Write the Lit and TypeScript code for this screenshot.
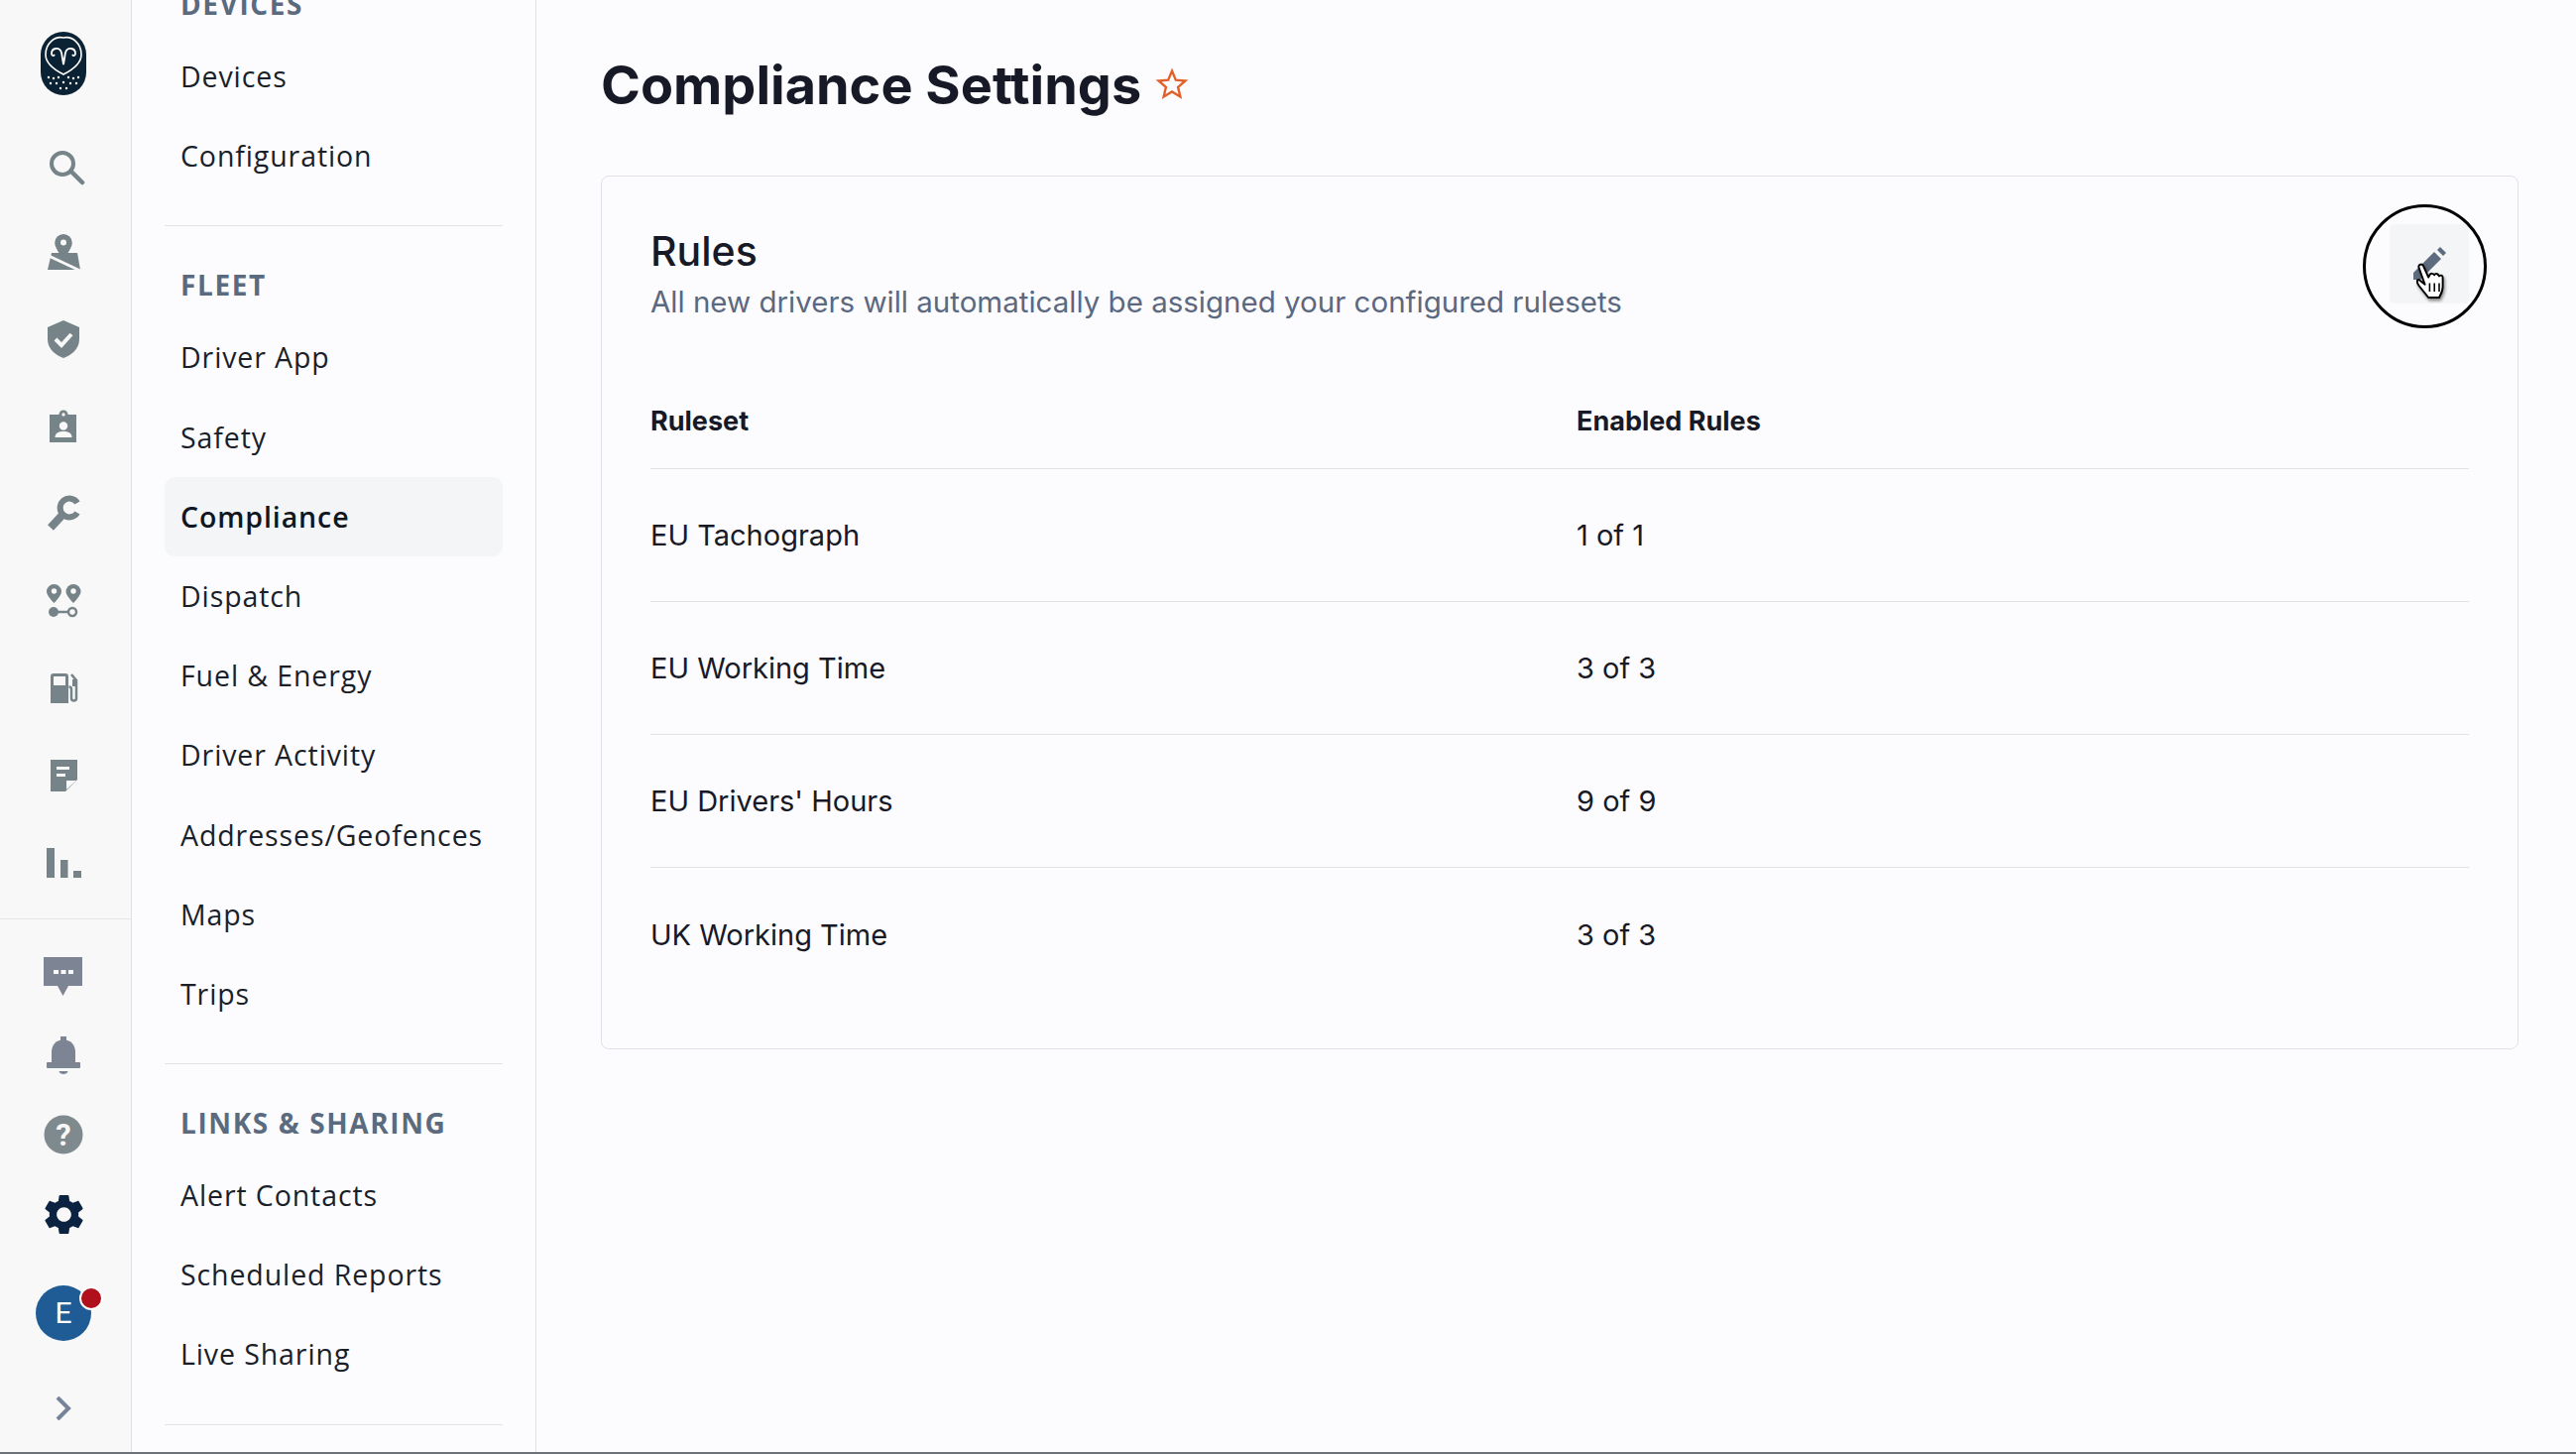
import { LitElement, html, css, svg } from "lit";
import { customElement } from "lit/decorators.js";

const G = "#768389";
const icon = (body: unknown, size = 44) =>
  html`<svg width=${size} height=${size} viewBox="0 0 44 44" aria-hidden="true">${body}</svg>`;

const topIcons = [
  svg`<g transform="translate(0 3)"><circle cx="21" cy="18" r="11" fill="none" stroke=${G} stroke-width="4"/><path d="M30 26 41 37" stroke=${G} stroke-width="4.5" stroke-linecap="round"/></g>`,
  svg`<path d="M6 40 10 23H36L39 40Z" fill=${G}/><path d="M22 4a8.8 8.8 0 0 1 8.8 8.8C30.8 19 22 29 22 29S13.2 19 13.2 12.8A8.8 8.8 0 0 1 22 4Z" fill=${G}/><circle cx="22" cy="12.5" r="3" fill="#f7f8f7"/><path d="M5 25 39 41" stroke="#f7f8f7" stroke-width="3"/>`,
  svg`<path d="M22 3 38 10V22C38 32 30 38 22 41 14 38 6 32 6 22V10Z" fill=${G}/><path d="M14 22l6 6 10-11" fill="none" stroke="#f7f8f7" stroke-width="4"/>`,
  svg`<rect x="8" y="10" width="27" height="28" fill=${G}/><circle cx="22" cy="10" r="4.5" fill=${G}/><circle cx="22" cy="10" r="1.7" fill="#f7f8f7"/><circle cx="22" cy="21.5" r="4.2" fill="#f7f8f7"/><path d="M13.5 33c0-4.5 4-6 8.5-6s8.5 1.5 8.5 6Z" fill="#f7f8f7"/>`,
  svg`<path d="M36 11A9.4 9.4 0 1 0 36 21" fill="none" stroke=${G} stroke-width="6"/><path d="M9 36 23 21" stroke=${G} stroke-width="8"/>`,
  svg`<path d="M12.5 5A7.5 7.5 0 0 1 20 12.5C20 16.5 12.5 24 12.5 24S5 16.5 5 12.5A7.5 7.5 0 0 1 12.5 5Z" fill=${G}/><circle cx="12.5" cy="12" r="2.7" fill="#f7f8f7"/><path d="M32 5A7.5 7.5 0 0 1 39.5 12.5C39.5 16.5 32 24 32 24S24.5 16.5 24.5 12.5A7.5 7.5 0 0 1 32 5Z" fill=${G}/><circle cx="32" cy="12" r="2.7" fill="#f7f8f7"/><circle cx="12" cy="33" r="5" fill=${G}/><path d="M12 33H27" stroke=${G} stroke-width="2.5"/><circle cx="31" cy="33" r="4" fill="none" stroke=${G} stroke-width="2.5"/>`,
  svg`<path d="M9 37V10a3 3 0 0 1 3-3H24a3 3 0 0 1 3 3V37Z" fill=${G}/><rect x="12" y="10" width="12" height="9" fill="#f7f8f7"/><path d="M30 8l5 6V32a2.5 2.5 0 0 1-5 0V23a2.5 2.5 0 0 0-2.5-2.5" fill="none" stroke=${G} stroke-width="2.5"/><rect x="31" y="13" width="4" height="7" fill=${G}/>`,
  svg`<path d="M9 6H36V26L24 38H9Z" fill=${G}/><rect x="15" y="13" width="13" height="3" fill="#f7f8f7"/><rect x="15" y="20" width="9" height="3" fill="#f7f8f7"/><path d="M25 36V27H35Z" fill="#f7f8f7"/>`,
  svg`<rect x="5" y="7" width="8" height="30" fill=${G}/><rect x="19" y="19" width="7.5" height="18" fill=${G}/><rect x="32" y="30" width="8" height="7" fill=${G}/>`,
];

const B = "#7d8493";
const bottomIcons = [
  icon(svg`<path d="M2 3H41V32H27L21.5 42 16 32H2Z" fill=${B}/><rect x="12" y="16" width="5" height="4" fill="#f7f8f7"/><rect x="19.5" y="16" width="5" height="4" fill="#f7f8f7"/><rect x="27" y="16" width="5" height="4" fill="#f7f8f7"/>`),
  icon(svg`<rect x="19" y="3" width="6" height="6" fill=${B}/><path d="M10 30V19C10 11 15 6.5 22 6.5S34 11 34 19V30Z" fill=${B}/><rect x="5" y="29" width="34" height="6" rx="1" fill=${B}/><path d="M17.5 38h9c-.5 2-2 3-4.5 3s-4-1-4.5-3Z" fill=${B}/>`),
  icon(svg`<circle cx="22" cy="22" r="19.5" fill="#7f8a8e"/><text x="22" y="33" text-anchor="middle" class="q">?</text>`),
  html`<svg width="49" height="49" viewBox="0 0 24 24" aria-hidden="true"><path fill="#0b2240" d="M19.14 12.94c.04-.3.06-.61.06-.94 0-.32-.02-.64-.07-.94l2.03-1.58c.18-.14.23-.41.12-.61l-1.92-3.32c-.12-.22-.37-.29-.59-.22l-2.39.96c-.5-.38-1.03-.7-1.62-.94l-.36-2.54c-.04-.24-.24-.41-.48-.41h-3.84c-.24 0-.43.17-.47.41l-.36 2.54c-.59.24-1.13.57-1.62.94l-2.39-.96c-.22-.08-.47 0-.59.22L2.74 8.87c-.12.21-.08.47.12.61l2.03 1.58c-.05.3-.09.63-.09.94s.02.64.07.94l-2.03 1.58c-.18.14-.23.41-.12.61l1.92 3.32c.12.22.37.29.59.22l2.39-.96c.5.38 1.03.7 1.62.94l.36 2.54c.05.24.24.41.48.41h3.84c.24 0 .44-.17.47-.41l.36-2.54c.59-.24 1.13-.56 1.62-.94l2.39.96c.22.08.47 0 .59-.22l1.92-3.32c.12-.22.07-.47-.12-.61l-2.01-1.58zM12 15.6c-1.98 0-3.6-1.62-3.6-3.6s1.62-3.6 3.6-3.6 3.6 1.62 3.6 3.6-1.62 3.6-3.6 3.6z"/></svg>`,
];

const logo = html`<svg width="46" height="64" viewBox="0 0 46 64" aria-hidden="true">
  <rect width="46" height="64" rx="23" fill="#0a2233"/>
  <path d="M23 6C32 4 41 12 41 23 41 32 31 39 23 43 15 39 5 32 5 23 5 12 14 4 23 6Z" fill="none" stroke="#fff" stroke-width="1.6"/>
  <path d="M11 22c0-6 8-7 10-1l2 12 2-12c2-6 10-5 10 1 0 2-2 3-3 1M11 22c0 2 2 3 3 1" fill="none" stroke="#fff" stroke-width="1.8"/>
  <g fill="#fff"><circle cx="8" cy="46" r="1.2"/><circle cx="13" cy="47" r="1.2"/><circle cx="18" cy="46" r="1.2"/><circle cx="28" cy="46" r="1.2"/><circle cx="33" cy="47" r="1.2"/><circle cx="38" cy="46" r="1.2"/>
  <circle cx="10" cy="52" r="1.2"/><circle cx="16" cy="52" r="1.2"/><circle cx="23" cy="51" r="1.2"/><circle cx="30" cy="52" r="1.2"/><circle cx="36" cy="52" r="1.2"/><circle cx="20" cy="57" r="1.2"/><circle cx="26" cy="57" r="1.2"/></g>
</svg>`;

const sections = [
  { label: "DEVICES", items: ["Devices", "Configuration"] },
  { label: "FLEET", items: ["Driver App", "Safety", "Compliance", "Dispatch", "Fuel & Energy", "Driver Activity", "Addresses/Geofences", "Maps", "Trips"] },
  { label: "LINKS & SHARING", items: ["Alert Contacts", "Scheduled Reports", "Live Sharing"] },
];

const rows = [
  ["EU Tachograph", "1 of 1"],
  ["EU Working Time", "3 of 3"],
  ["EU Drivers' Hours", "9 of 9"],
  ["UK Working Time", "3 of 3"],
];

@customElement("app-root")
export class AppRoot extends LitElement {
  static styles = css`
    :host { display: block; width: 2598px; height: 1466px; overflow: hidden; background: #fcfcfe; }
    * { box-sizing: border-box; }
    .page { display: flex; height: 1464px; }
    .endline { height: 2px; background: #6d7178; }
    .rail { width: 133px; flex: none; background: #f7f8f7; border-right: 1px solid #dfe3e6; display: flex; flex-direction: column; align-items: center; padding: 32px 4px 0 0; }
    .logo { height: 64px; margin-bottom: 26px; display: flex; }
    .cell { height: 88px; width: 100%; display: flex; align-items: center; justify-content: center; flex: none; }
    .rail hr { align-self: stretch; margin: 12px -4px 17px 0; border: 0; border-top: 1px solid #e4e7e8; }
    .cell.low { height: 80px; }
    .q { font: 700 31px "Roboto", sans-serif; fill: #f7f8f7; }
    .avatar { position: relative; width: 56px; height: 56px; margin-top: 32px; flex: none; border-radius: 50%; background: #1f5c96; color: #fff; font: 400 30px/56px "Roboto", sans-serif; text-align: center; }
    .dot { position: absolute; left: 44px; top: 1px; width: 24px; height: 24px; border-radius: 50%; background: #b0101c; border: 2.5px solid #fff; }
    .chev { margin-top: 56px; display: flex; }
    .side { width: 408px; flex: none; border-right: 1px solid #dfe3e8; padding: 0 33px; font-family: "Open Sans", sans-serif; overflow: hidden; }
    .side-inner { margin-top: -16px; }
    .label { height: 40px; line-height: 40px; padding-left: 16px; font-size: 28px; font-weight: 700; color: #5b6b7f; letter-spacing: 1.6px; margin-bottom: 13px; white-space: nowrap; }
    .item { height: 80.2px; line-height: 80.2px; padding-left: 16px; font-size: 28.5px; color: #1a1f29; white-space: nowrap; border-radius: 10px; letter-spacing: .9px; }
    .item.on { background: #f4f5f6; font-weight: 600; color: #12161f; }
    .side hr { margin: 30px 0 39px; border: 0; border-top: 1px solid #dfe2e6; }
    .main { flex: 1; min-width: 0; padding: 0 58px 0 65px; font-family: "Inter", sans-serif; color: #171a26; }
    .title { height: 177px; display: flex; align-items: center; gap: 14px; padding-bottom: 5px; }
    .title svg { margin-bottom: 3px; }
    h1 { margin: 0; font-size: 54px; font-weight: 700; line-height: 64px; }
    .card { border: 1px solid #dfe2e8; border-radius: 8px; padding: 48px 49px; }
    .head { display: flex; justify-content: space-between; align-items: flex-start; margin-bottom: 51px; }
    .intro { padding-top: 2px; }
    h2 { margin: 0 0 4px; font-size: 41px; font-weight: 500; line-height: 50px; }
    .sub { font-size: 29.5px; line-height: 44px; color: #5b6880; }
    .btn { position: relative; width: 80px; height: 80px; background: #f4f5f6; border-radius: 4px; }
    .ring { position: absolute; left: -27px; top: -20px; width: 125px; height: 125px; border: 3px solid #000; border-radius: 50%; }
    .btn svg { position: absolute; left: 0; top: 0; }
    .hand { filter: drop-shadow(1px 2px 1.5px rgba(0,0,0,.45)); }
    .grid { display: grid; grid-template-columns: 934px 1fr; }
    .th, .td { display: flex; align-items: center; border-bottom: 1px solid #dfe3e7; }
    .th { height: 96px; font-size: 27px; font-weight: 700; }
    .td { height: 134px; font-size: 29px; }
    .td.last { border-bottom: 0; }
  `;

  render() {
    return html`
      <div class="page">
        <div class="rail">
          <div class="logo">${logo}</div>
          ${topIcons.map((i) => html`<div class="cell">${icon(i)}</div>`)}
          <hr />
          ${bottomIcons.map((i) => html`<div class="cell low">${i}</div>`)}
          <div class="avatar">E<span class="dot"></span></div>
          <div class="chev"><svg width="16" height="24" viewBox="0 0 16 24" aria-hidden="true"><path d="M2 1 13 12 2 23" fill="none" stroke="#77839a" stroke-width="4"/></svg></div>
        </div>
        <div class="side"><div class="side-inner">
          ${sections.map((s) => html`
            <div class="label">${s.label}</div>
            ${s.items.map((it) => html`<div class="item ${it === "Compliance" ? "on" : ""}">${it}</div>`)}
            <hr />`)}
        </div></div>
        <div class="main">
          <div class="title">
            <h1>Compliance Settings</h1>
            <svg width="34" height="34" viewBox="0 0 24 24" aria-hidden="true"><path d="M12 2.5l2.7 6.4 6.8.6-5.2 4.5 1.6 6.8L12 17.200l-5.900 3.600 1.600-6.800-5.200-4.500 6.800-.6Z" fill="none" stroke="#e2612a" stroke-width="1.7"/></svg>
          </div>
          <div class="card">
            <div class="head">
              <div class="intro"><h2>Rules</h2><div class="sub">All new drivers will automatically be assigned your configured rulesets</div></div>
              <div class="btn">
                <span class="ring"></span>
                <svg width="80" height="80" viewBox="0 0 80 80" aria-hidden="true">
                  <path d="M24 49 45 28 52 35 31 56 24 56Z" fill="#5d6b7e"/><path d="M48 26l3-3 6 6-3 3Z" fill="#5d6b7e"/>
                  <g class="hand" transform="translate(-4 -10) scale(1.2)">
                    <path d="M28 60c-2-3-2-5 0-5l5 4-5-14c-1-3 3-4 4-1l4 9 1-2c1-2 3-1 4 0 1-2 3-1 4 1 1-1 3-1 3 1v8c0 4-2 7-3 9H36Z" fill="#fff" stroke="#000" stroke-width="1.6" stroke-linejoin="round"/>
                    <path d="M37 58v7M41 58v7M45 58v7" stroke="#000" stroke-width="1.3"/>
                  </g>
                </svg>
              </div>
            </div>
            <div class="grid">
              <div class="th">Ruleset</div><div class="th">Enabled Rules</div>
              ${rows.map((r, i) => html`<div class="td ${i === 3 ? "last" : ""}">${r[0]}</div><div class="td ${i === 3 ? "last" : ""}">${r[1]}</div>`)}
            </div>
          </div>
        </div>
      </div>
      <div class="endline"></div>
    `;
  }
}
